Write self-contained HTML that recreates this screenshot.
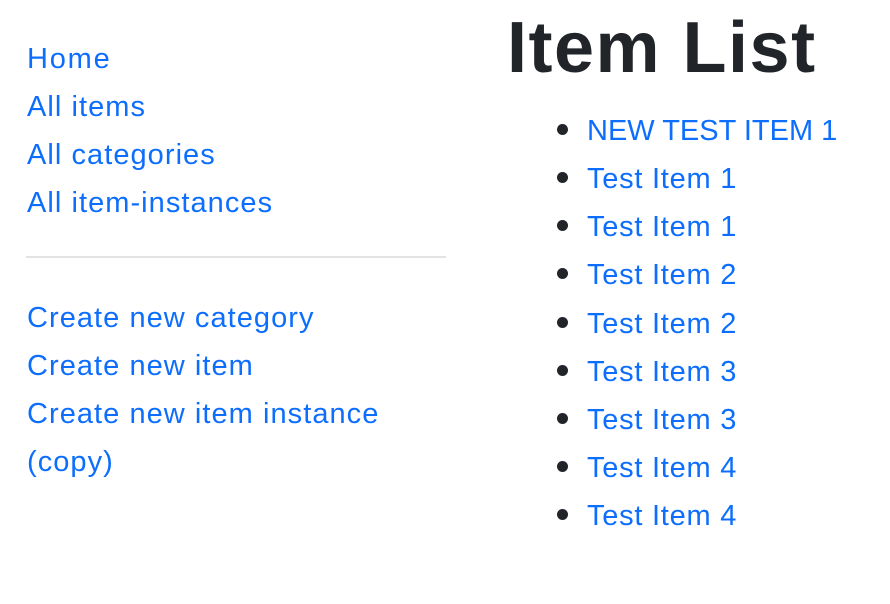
<!DOCTYPE html>
<html><head><meta charset="utf-8"><style>
body{margin:0;width:890px;height:604px;background:#fff;font-family:"Liberation Sans",sans-serif;overflow:hidden;position:relative}
a{color:#0d6efd;text-decoration:none;position:absolute;font-size:29px;line-height:48px;white-space:nowrap;letter-spacing:1.05px;top:1px}
.hr{position:absolute;left:26px;top:256px;width:420px;height:2px;background:#e3e3e3}
h1{position:absolute;left:507px;top:1px;margin:0;font-size:72px;line-height:94px;font-weight:bold;color:#212529;letter-spacing:1.5px}
.dot{position:absolute;left:557px;width:11px;height:11px;border-radius:50%;background:#212529}
</style></head><body>
<a style="left:27px;top:35px;letter-spacing:1.8px">Home</a>
<a style="left:27px;top:83px">All items</a>
<a style="left:27px;top:131px">All categories</a>
<a style="left:27px;top:179px">All item-instances</a>
<div class="hr"></div>
<a style="left:27px;top:294px">Create new category</a>
<a style="left:27px;top:342px">Create new item</a>
<a style="left:27px;top:390px">Create new item instance</a>
<a style="left:27px;top:438px">(copy)</a>
<h1>Item List</h1>
<div class="dot" style="top:124px"></div><a style="left:587px;top:107px;letter-spacing:0">NEW TEST ITEM 1</a>
<div class="dot" style="top:172px"></div><a style="left:587px;top:155px;letter-spacing:0.75px">Test Item 1</a>
<div class="dot" style="top:220px"></div><a style="left:587px;top:203px;letter-spacing:0.75px">Test Item 1</a>
<div class="dot" style="top:268px"></div><a style="left:587px;top:251px;letter-spacing:0.75px">Test Item 2</a>
<div class="dot" style="top:317px"></div><a style="left:587px;top:300px;letter-spacing:0.75px">Test Item 2</a>
<div class="dot" style="top:365px"></div><a style="left:587px;top:348px;letter-spacing:0.75px">Test Item 3</a>
<div class="dot" style="top:413px"></div><a style="left:587px;top:396px;letter-spacing:0.75px">Test Item 3</a>
<div class="dot" style="top:461px"></div><a style="left:587px;top:444px;letter-spacing:0.75px">Test Item 4</a>
<div class="dot" style="top:509px"></div><a style="left:587px;top:492px;letter-spacing:0.75px">Test Item 4</a>
</body></html>
